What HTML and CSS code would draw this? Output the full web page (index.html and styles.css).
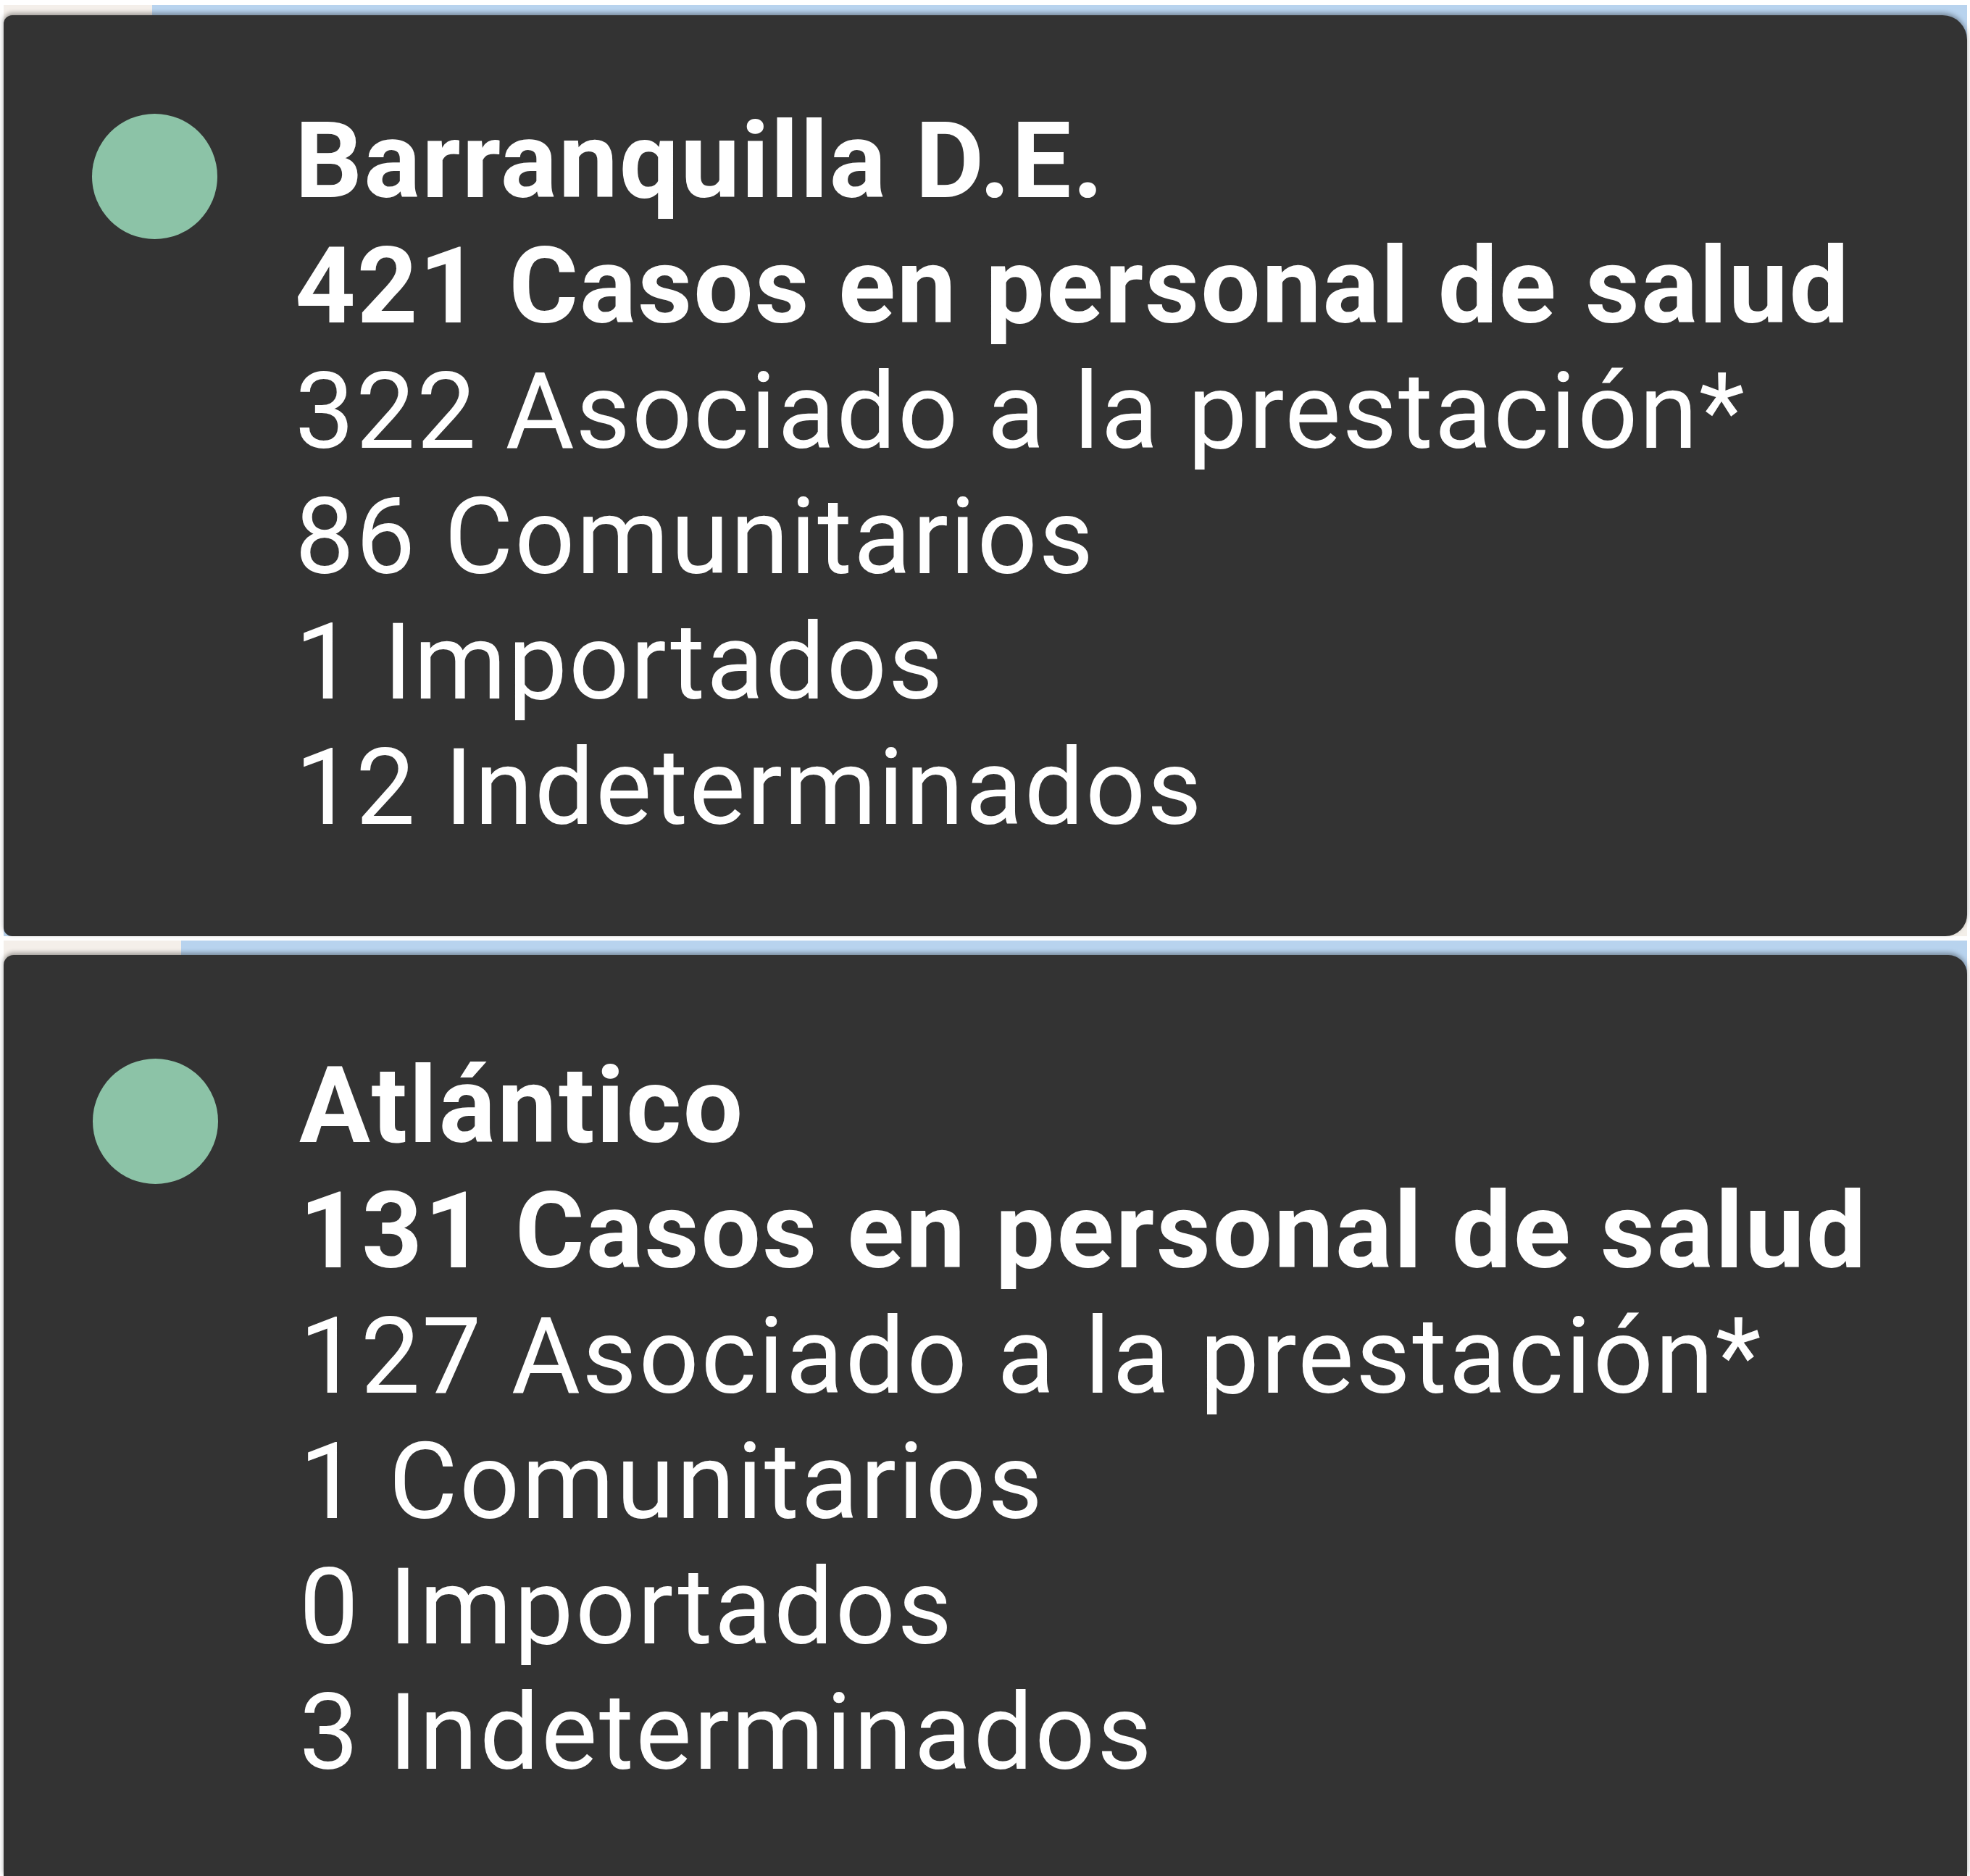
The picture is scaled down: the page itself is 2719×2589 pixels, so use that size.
FILE: index.html
```html
<!DOCTYPE html>
<html>
<head>
    <meta charset="UTF-8">
    <title>Casos en personal de salud</title>
    <link rel="stylesheet" href="styles.css">
</head>
<body>
    <div class="stack">
        <div class="map-frame">
            <div class="tooltip">
                <span class="dot"></span>
                <div class="lines">
                    <div class="line strong">Barranquilla D.E.</div>
                    <div class="line strong">421 Casos en personal de salud</div>
                    <div class="line">322 Asociado a la prestación*</div>
                    <div class="line">86 Comunitarios</div>
                    <div class="line">1 Importados</div>
                    <div class="line">12 Indeterminados</div>
                </div>
            </div>
        </div>
        <div class="map-frame second">
            <div class="tooltip">
                <span class="dot"></span>
                <div class="lines">
                    <div class="line strong">Atlántico</div>
                    <div class="line strong">131 Casos en personal de salud</div>
                    <div class="line">127 Asociado a la prestación*</div>
                    <div class="line">1 Comunitarios</div>
                    <div class="line">0 Importados</div>
                    <div class="line">3 Indeterminados</div>
                </div>
            </div>
        </div>
    </div>
</body>
</html>
```

FILE: styles.css
```css
* {
    margin: 0;
    padding: 0;
    box-sizing: border-box;
}

body {
    background: #ffffff;
    font-family: Roboto, "Liberation Sans", sans-serif;
    overflow: hidden;
}

.stack {
    display: flex;
    flex-direction: column;
    gap: 6px;
    padding: 7px 4px 0 5px;
    height: 2589px;
}

/* the map peeking out around the tooltip */
.map-frame {
    display: flex;
    flex-direction: column;
    height: 1285px;
    padding-top: 14px;
    background:
        linear-gradient(90deg, #b8d3ee 0 30px, transparent 30px calc(100% - 60px), #f3efe9 calc(100% - 60px)) bottom / 100% 60px no-repeat,
        linear-gradient(90deg, #f4efea 0 205px, #b8d3ee 205px);
}

.map-frame.second {
    flex: 1;
    height: auto;
    padding-top: 20px;
    background: linear-gradient(90deg, #f4efea 0 245px, #b8d3ee 245px);
}

.tooltip {
    flex: 1;
    display: flex;
    align-items: flex-start;
    gap: 107px;
    padding: 115px 40px 0 122px;
    background: #333333;
    border-radius: 12px 34px 30px 12px;
    box-shadow: 0 -3px 6px rgba(0, 0, 0, 0.35);
}

.second .tooltip {
    padding-top: 122px;
    padding-left: 123px;
    gap: 112px;
    border-radius: 14px 26px 0 0;
}

.dot {
    flex: none;
    width: 173px;
    height: 173px;
    margin-top: 21px;
    border-radius: 50%;
    background: #8cc3a7;
}

.lines {
    color: #ffffff;
    letter-spacing: 2px;
}

.second .lines {
    letter-spacing: 2.6px;
}

.line {
    font-size: 146px;
    line-height: 173px;
    font-weight: 400;
    white-space: nowrap;
}

.line.strong {
    font-weight: 700;
}
```
